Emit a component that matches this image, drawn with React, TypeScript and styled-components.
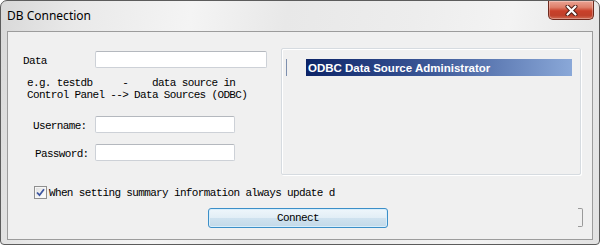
import React from 'react';
import styled, { createGlobalStyle } from 'styled-components';

const GlobalStyle = createGlobalStyle`
  html, body {
    margin: 0;
    padding: 0;
    background: #ffffff;
  }
  * {
    box-sizing: border-box;
  }
`;

const App: React.FC = () => {
  return (
    <>
      <GlobalStyle />
      <Window>
        <TitleBar>
          <Title>DB Connection</Title>
          <CloseButton>
            <svg width="13" height="11" viewBox="0 0 13 11">
              <path d="M2.5 1.5 L10.5 9.5 M10.5 1.5 L2.5 9.5" stroke="#4a1a12" strokeWidth="4" strokeLinecap="round" />
              <path d="M2.5 1.5 L10.5 9.5 M10.5 1.5 L2.5 9.5" stroke="#ffffff" strokeWidth="2.2" strokeLinecap="round" />
            </svg>
          </CloseButton>
        </TitleBar>

        <Client>
          <TopRow>
            <LeftColumn>
              <FieldRow>
                <Label>Data</Label>
                <TextBox $width={172} />
              </FieldRow>

              <Hint>{'e.g. testdb     -    data source in\nControl Panel --> Data Sources (ODBC)'}</Hint>

              <FieldRow $gap={15}>
                <Label $indent={10}>Username:</Label>
                <TextBox $width={140} />
              </FieldRow>

              <FieldRow $gap={11}>
                <Label $indent={12}>Password:</Label>
                <TextBox $width={140} />
              </FieldRow>
            </LeftColumn>

            <ListPanel>
              <ListRow>
                <FocusLine />
                <SelectedItem>ODBC Data Source Administrator</SelectedItem>
              </ListRow>
            </ListPanel>
          </TopRow>

          <CheckRow>
            <CheckBox>
              <svg width="11" height="11" viewBox="0 0 11 11">
                <path d="M2 5.5 L4.5 8.2 L9 2.2" stroke="#3d56a0" strokeWidth="1.8" fill="none" />
              </svg>
            </CheckBox>
            <MonoText>When setting summary information always update d</MonoText>
          </CheckRow>

          <ButtonRow>
            <ConnectButton>Connect</ConnectButton>
            <ClippedButton />
          </ButtonRow>
        </Client>
      </Window>
    </>
  );
};

// Styled components
const Window = styled.div`
  width: 600px;
  height: 245px;
  display: flex;
  flex-direction: column;
  padding: 0 6px 4px 6px;
  border: 1px solid #5c5c5c;
  border-radius: 7px 7px 4px 4px;
  background: linear-gradient(
    100deg,
    #d8d8d8 0%,
    #e9e9e9 12%,
    #f4f4f4 30%,
    #e8e8e8 45%,
    #ededed 65%,
    #f3f3f3 80%,
    #e2e2e2 100%
  );
`;

const TitleBar = styled.div`
  height: 30px;
  margin: 0 -6px;
  padding-left: 6px;
  display: flex;
  align-items: flex-start;
  justify-content: space-between;
`;

const Title = styled.span`
  margin-top: 7px;
  font-family: 'Noto Sans', 'Open Sans', sans-serif;
  font-size: 12px;
  line-height: 16px;
  color: #000;
`;

const CloseButton = styled.div`
  width: 46px;
  height: 19px;
  margin-right: 5px;
  display: flex;
  align-items: center;
  justify-content: center;
  border: 1px solid #6e2a1e;
  border-top: none;
  border-radius: 0 0 5px 5px;
  background: linear-gradient(
    to bottom,
    #eba393 0%,
    #de7f6a 35%,
    #c9402a 55%,
    #c0402a 80%,
    #d06a52 100%
  );
  box-shadow: inset 0 0 0 1px rgba(255, 255, 255, 0.3);
`;

const Client = styled.div`
  flex: 1;
  display: flex;
  flex-direction: column;
  padding: 16px 10px 0 15px;
  border: 1px solid #9c9c9c;
  background: #f0f0f0;
`;

const TopRow = styled.div`
  display: flex;
  align-items: flex-start;
`;

const LeftColumn = styled.div`
  width: 258px;
  padding-top: 3px;
  display: flex;
  flex-direction: column;
`;

const FieldRow = styled.div<{ $gap?: number }>`
  display: flex;
  align-items: center;
  height: 17px;
  margin-top: ${(p) => p.$gap ?? 0}px;
`;

const MonoText = styled.span`
  font-family: 'Liberation Mono', 'DejaVu Sans Mono', monospace;
  font-size: 11px;
  letter-spacing: -0.65px;
  color: #000;
  white-space: pre;
`;

const Label = styled(MonoText)<{ $indent?: number }>`
  width: 72px;
  padding-top: 2px;
  padding-left: ${(p) => p.$indent ?? 0}px;
`;

const TextBox = styled.div<{ $width: number }>`
  width: ${(p) => p.$width}px;
  height: 17px;
  background: #ffffff;
  border: 1px solid #cdd1d7;
  border-top-color: #b4b8be;
  border-radius: 2px;
`;

const Hint = styled(MonoText)`
  display: block;
  margin-top: 9px;
  padding-left: 4px;
  line-height: 12px;
`;

const ListPanel = styled.div`
  width: 300px;
  height: 127px;
  padding-top: 10px;
  border: 1px solid #d6dbe0;
  border-radius: 2px;
  box-shadow: inset 1px 1px 0 #ffffff, 1px 1px 0 #ffffff;
`;

const ListRow = styled.div`
  display: flex;
  align-items: center;
  height: 17px;
`;

const FocusLine = styled.div`
  width: 1px;
  height: 17px;
  margin-left: 4px;
  background: #7d8fae;
`;

const SelectedItem = styled.div`
  width: 266px;
  height: 17px;
  margin-left: 19px;
  padding-left: 2px;
  display: flex;
  align-items: center;
  background: linear-gradient(to right, #0c2468 0%, #3a5696 45%, #8aa8d8 100%);
  color: #ffffff;
  font-family: 'Liberation Sans', Arial, sans-serif;
  font-weight: 700;
  font-size: 11.5px;
`;

const CheckRow = styled.div`
  display: flex;
  align-items: center;
  gap: 2px;
  margin-top: 11px;
  margin-left: 11px;
  height: 13px;
`;

const CheckBox = styled.div`
  width: 13px;
  height: 13px;
  display: flex;
  align-items: center;
  justify-content: center;
  border: 1px solid #8f8f8f;
  background: linear-gradient(135deg, #dcdcdc 0%, #f4f4f4 60%, #ffffff 100%);
  box-shadow: inset 0 0 0 1px #f6f6f6;
`;

const ButtonRow = styled.div`
  display: flex;
  align-items: flex-start;
  margin-top: 9px;
`;

const ConnectButton = styled.button`
  width: 180px;
  height: 20px;
  margin-left: 185px;
  padding: 0;
  border: 1px solid #3c8fc8;
  border-radius: 3px;
  background: linear-gradient(to bottom, #eef6fb 0%, #e2eef6 48%, #cfe2ef 52%, #c3d9e8 100%);
  box-shadow: inset 0 0 0 1px #d8eefb;
  font-family: 'Liberation Mono', 'DejaVu Sans Mono', monospace;
  font-size: 11px;
  letter-spacing: -0.6px;
  color: #000;
`;

const ClippedButton = styled.div`
  width: 5px;
  height: 19px;
  margin-left: auto;
  margin-right: -1px;
  border: 1px solid #9a9a9a;
  border-left: none;
  border-radius: 0 2px 2px 0;
`;

export default App;
